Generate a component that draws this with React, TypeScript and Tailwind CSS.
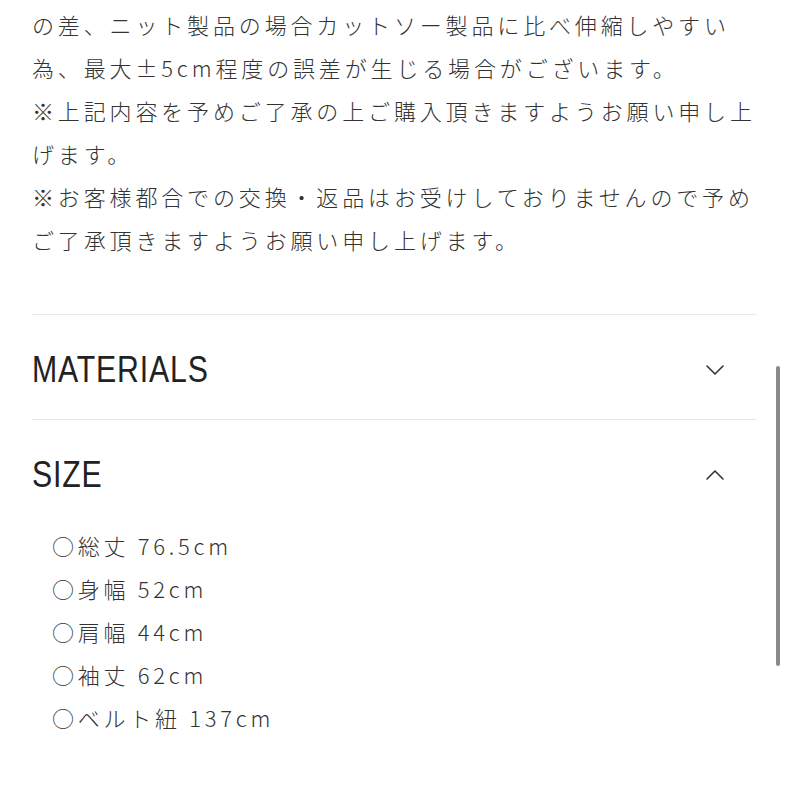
import React from 'react';

const jp = { fontFamily: '"Noto Sans CJK JP", "Noto Sans", sans-serif' };
const head = { fontFamily: '"Liberation Sans", Arial, sans-serif' };

const Chevron: React.FC<{ up?: boolean }> = ({ up }) => (
  <svg width="20" height="12" viewBox="0 0 20 12" fill="none" stroke="#333" strokeWidth="1.6" strokeLinecap="round" strokeLinejoin="round">
    {up ? <path d="M2 10 L10 2 L18 10" /> : <path d="M2 2 L10 10 L18 2" />}
  </svg>
);

const App: React.FC = () => {
  const notes = [
    'の差、ニット製品の場合カットソー製品に比べ伸縮しやすい',
    '為、最大±5cm程度の誤差が生じる場合がございます。',
    '※上記内容を予めご了承の上ご購入頂きますようお願い申し上',
    'げます。',
    '※お客様都合での交換・返品はお受けしておりませんので予め',
    'ご了承頂きますようお願い申し上げます。',
  ];

  const sizes = ['○総丈 76.5cm', '○身幅 52cm', '○肩幅 44cm', '○袖丈 62cm', '○ベルト紐 137cm'];

  return (
    <div className="relative w-full h-[788px] bg-white overflow-hidden">
      <div className="px-8 pt-[3px]">
        <div className="text-[22px] leading-[43px] tracking-[0.175em] font-light text-[#333] whitespace-nowrap" style={jp}>
          {notes.map((line, i) => (
            <div key={i}>{line}</div>
          ))}
        </div>

        <div className="mt-[53px] border-t border-[#e8e8e8]">
          <div className="h-[104px] flex items-center justify-between pt-[5px]">
            <span className="inline-block origin-left scale-x-[0.84] text-[36px] tracking-[1px] text-[#222]" style={head}>MATERIALS</span>
            <span className="mr-[31px]"><Chevron /></span>
          </div>
        </div>

        <div className="border-t border-[#e8e8e8]">
          <div className="h-[104px] flex items-center justify-between pt-[5px]">
            <span className="inline-block origin-left scale-x-[0.84] text-[36px] tracking-[1px] text-[#222]" style={head}>SIZE</span>
            <span className="mr-[31px]"><Chevron up /></span>
          </div>
          <div className="pl-5 text-[22px] leading-[43px] tracking-[0.17em] font-light text-[#333]" style={jp}>
            {sizes.map((s, i) => (
              <div key={i}>{s}</div>
            ))}
          </div>
        </div>
      </div>

      {/* scrollbar */}
      <div className="absolute right-[8px] top-[366px] w-[4px] h-[300px] rounded-full bg-[#8a8a8a]" />
    </div>
  );
};

export default App;
